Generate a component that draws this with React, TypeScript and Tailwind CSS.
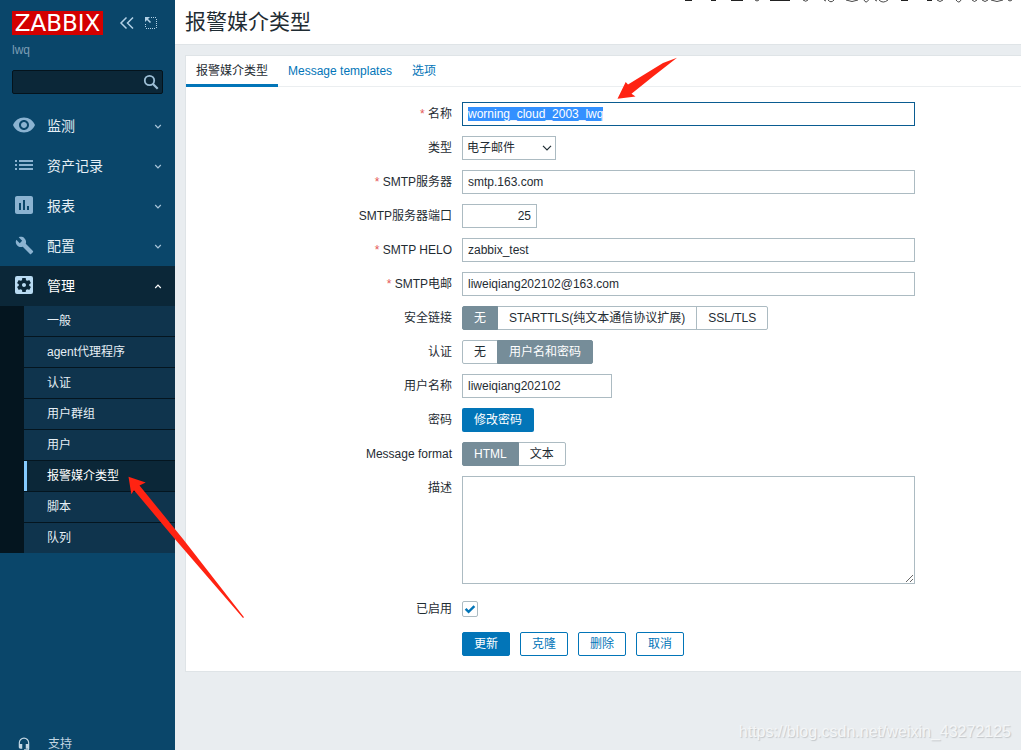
import { useEffect, useRef, useState } from "react";
import type { ReactNode } from "react";
import {
  MdAssessment,
  MdBuild,
  MdHeadsetMic,
  MdList,
  MdSettingsApplications,
  MdVisibility,
} from "react-icons/md";

const MENU = [
  { label: "监测", icon: <MdVisibility size={24} /> },
  { label: "资产记录", icon: <MdList size={24} /> },
  { label: "报表", icon: <MdAssessment size={24} /> },
  { label: "配置", icon: <MdBuild size={19} /> },
  { label: "管理", icon: <MdSettingsApplications size={24} />, open: true },
];

const SUBMENU = ["一般", "agent代理程序", "认证", "用户群组", "用户", "报警媒介类型", "脚本", "队列"];
const ACTIVE_SUB = "报警媒介类型";

const TABS = ["报警媒介类型", "Message templates", "选项"];

const inputClass =
  "h-6 border border-[#acbbc2] bg-white px-[5px] text-xs leading-[14px] text-[#1f2c33] outline-none focus:border-[#0a5c91]";

function Chevron({ up }: { up?: boolean }) {
  return (
    <svg
      className={up ? "text-white" : "text-[#a9c6da]"}
      width="8"
      height="6"
      viewBox="0 0 8 6"
      fill="none"
      stroke="currentColor"
      strokeWidth="1.2"
    >
      <path d={up ? "M1.200 5 4 2.200l2.800 2.800" : "M1.200 2 4 4.800l2.800-2.800"} />
    </svg>
  );
}

function Sidebar() {
  return (
    <aside className="flex h-full w-[175px] shrink-0 flex-col overflow-hidden bg-[#0a466a]">
      <div className="flex h-[37px] shrink-0 items-start px-3 pt-[11px]">
        <a
          href="#home"
          className="flex h-6 w-[91px] items-center justify-center bg-[#d40000] font-['DejaVu_Sans',sans-serif] text-[23px] leading-6 text-white"
        >
          ZABBIX
        </a>
        <button type="button" aria-label="Collapse sidebar" className="ml-4 flex h-6 w-4 items-center text-[#b3d1e6]">
          <svg width="16" height="14" viewBox="0 0 16 14" fill="none" stroke="currentColor" strokeWidth="1.5">
            <path d="M7.500 1.500 2 7l5.500 5.500M14 1.500 8.500 7l5.500 5.500" />
          </svg>
        </button>
        <button type="button" aria-label="Hide sidebar" className="ml-[9px] flex h-6 w-4 items-center text-[#b3d1e6]">
          <svg width="14" height="14" viewBox="0 0 14 14" fill="none" stroke="currentColor">
            <path
              d="M7 1.500h6M12.500 3v10M11 12.500H1M1.500 11V7"
              strokeDasharray="1 1"
              shapeRendering="crispEdges"
            />
            <path d="M1 1h5L1 6z" fill="currentColor" stroke="none" />
            <path d="m2.500 2.500 4 4" strokeWidth="1.600" />
          </svg>
        </button>
      </div>
      <p className="shrink-0 px-3 pt-1 text-xs leading-[18px] text-[#7d9eb5]">lwq</p>

      <form className="relative mx-3 mt-[11px] shrink-0" onSubmit={(e) => e.preventDefault()}>
        <input
          type="text"
          aria-label="Search"
          className="block h-6 w-full rounded-xs border border-[#04131c] bg-[#0b2738] pr-7 pl-1.5 text-xs text-white outline-none"
        />
        <button type="submit" aria-label="Search" className="absolute top-1 right-1 text-[#9dbfd6]">
          <svg width="16" height="16" viewBox="0 0 16 16" fill="none" stroke="currentColor">
            <circle cx="6.500" cy="6.500" r="4.700" strokeWidth="1.800" />
            <path d="m10 10 4.700 4.700" strokeWidth="2.200" />
          </svg>
        </button>
      </form>

      <nav className="mt-3 shrink-0">
        {MENU.map((item) => (
          <a
            key={item.label}
            href="#menu"
            className={`flex h-10 items-center pr-[13px] text-sm ${
              item.open ? "bg-[#0b2738] text-white" : "text-[#e6eff5]"
            }`}
          >
            <span
              className={`flex w-12 shrink-0 justify-center pb-0.5 ${
                item.open ? "text-[#b9dbf2]" : "text-[#8bb3d1]"
              }`}
            >
              {item.icon}
            </span>
            <span className="-ml-px flex-1">{item.label}</span>
            <Chevron up={item.open} />
          </a>
        ))}
        <ul className="bg-[#04151f] pl-6">
          {SUBMENU.map((label) => (
            <li key={label} className="border-b border-[#04151f] last:border-b-0">
              <a
                href="#submenu"
                className={`flex h-[30px] items-center border-l-3 pl-5 text-xs ${
                  label === ACTIVE_SUB
                    ? "border-[#85cbff] bg-[#0b2738] text-white"
                    : "border-[#0f344d] bg-[#0f344d] text-[#e6eff5]"
                }`}
              >
                {label}
              </a>
            </li>
          ))}
        </ul>
      </nav>

      <div className="mt-auto h-[27px] shrink-0 overflow-hidden">
        <a href="#support" className="flex h-[42px] items-center text-xs text-[#c3d6e3]">
          <span className="flex w-12 justify-center">
            <MdHeadsetMic size={14} />
          </span>
          支持
        </a>
      </div>
    </aside>
  );
}

interface RowProps {
  label: string;
  htmlFor?: string;
  required?: boolean;
  children: ReactNode;
}

function Row({ label, htmlFor, required, children }: RowProps) {
  return (
    <div className="flex items-start">
      <label htmlFor={htmlFor} className="w-[276px] shrink-0 pr-2.5 text-right text-xs leading-6">
        {required && <span className="text-[#e45959]">* </span>}
        {label}
      </label>
      {children}
    </div>
  );
}

function Segmented({ name, options, initial }: { name: string; options: string[]; initial: string }) {
  const [value, setValue] = useState(initial);
  return (
    <div role="radiogroup" aria-label={name} className="flex">
      {options.map((option) => (
        <label
          key={option}
          className="relative -ml-px flex h-6 items-center border border-[#acbbc2] px-[11px] text-xs first:ml-0 first:rounded-l-xs last:rounded-r-xs has-checked:z-10 has-checked:border-[#768d99] has-checked:bg-[#768d99] has-checked:text-white"
        >
          <input
            type="radio"
            name={name}
            checked={value === option}
            onChange={() => setValue(option)}
            className="sr-only"
          />
          {option}
        </label>
      ))}
    </div>
  );
}

function MediaTypeForm() {
  const nameRef = useRef<HTMLInputElement>(null);

  useEffect(() => {
    nameRef.current?.focus();
    nameRef.current?.select();
  }, []);

  return (
    <form className="flex flex-col gap-2.5 pt-[15px] pb-[15px]" onSubmit={(e) => e.preventDefault()}>
      <Row label="名称" htmlFor="name" required>
        <input
          id="name"
          ref={nameRef}
          defaultValue="worning_cloud_2003_lwq"
          className={`${inputClass} w-full max-w-[453px] selection:bg-[#3390ff] selection:text-white`}
        />
      </Row>
      <Row label="类型" htmlFor="type">
        <div className="relative">
          <select
            id="type"
            className="block h-6 w-[94px] appearance-none border border-[#acbbc2] bg-white pl-1 text-xs outline-none"
          >
            <option>电子邮件</option>
          </select>
          <svg
            className="pointer-events-none absolute top-2 right-1"
            width="10"
            height="8"
            viewBox="0 0 10 8"
            fill="none"
            stroke="#1f2c33"
            strokeWidth="1.2"
          >
            <path d="M1 1.800 5 5.800l4-4" />
          </svg>
        </div>
      </Row>
      <Row label="SMTP服务器" htmlFor="server" required>
        <input id="server" defaultValue="smtp.163.com" className={`${inputClass} w-full max-w-[453px]`} />
      </Row>
      <Row label="SMTP服务器端口" htmlFor="port">
        <input id="port" defaultValue="25" className={`${inputClass} w-[75px] text-right`} />
      </Row>
      <Row label="SMTP HELO" htmlFor="helo" required>
        <input id="helo" defaultValue="zabbix_test" className={`${inputClass} w-full max-w-[453px]`} />
      </Row>
      <Row label="SMTP电邮" htmlFor="email" required>
        <input id="email" defaultValue="liweiqiang202102@163.com" className={`${inputClass} w-full max-w-[453px]`} />
      </Row>
      <Row label="安全链接">
        <Segmented name="安全链接" options={["无", "STARTTLS(纯文本通信协议扩展)", "SSL/TLS"]} initial="无" />
      </Row>
      <Row label="认证">
        <Segmented name="认证" options={["无", "用户名和密码"]} initial="用户名和密码" />
      </Row>
      <Row label="用户名称" htmlFor="username">
        <input id="username" defaultValue="liweiqiang202102" className={`${inputClass} w-[150px]`} />
      </Row>
      <Row label="密码" htmlFor="password">
        <button id="password" type="button" className="h-6 rounded-xs bg-[#0275b8] px-3 text-xs text-white">
          修改密码
        </button>
      </Row>
      <Row label="Message format">
        <Segmented name="Message format" options={["HTML", "文本"]} initial="HTML" />
      </Row>
      <Row label="描述" htmlFor="description">
        <textarea
          id="description"
          className="block h-[108px] w-full max-w-[453px] resize border border-[#acbbc2] p-1 text-xs outline-none"
        />
      </Row>
      <div className="flex h-7 items-center pt-0.5">
        <label htmlFor="enabled" className="w-[276px] shrink-0 pr-2.5 text-right text-xs">
          已启用
        </label>
        <div className="relative size-4">
          <input
            id="enabled"
            type="checkbox"
            defaultChecked
            className="peer block size-4 appearance-none rounded-xs border border-[#acbbc2] bg-white"
          />
          <svg
            className="pointer-events-none absolute inset-0 hidden peer-checked:block"
            width="16"
            height="16"
            viewBox="0 0 16 16"
            fill="none"
            stroke="#0275b8"
            strokeWidth="2.4"
          >
            <path d="m3.600 7.800 3 3 5.800-5.600" />
          </svg>
        </div>
      </div>
      <div className="flex gap-2.5 pl-[276px] text-xs">
        <button type="submit" className="h-6 rounded-xs border border-[#0275b8] bg-[#0275b8] px-[11px] text-white">
          更新
        </button>
        {["克隆", "删除", "取消"].map((label) => (
          <button key={label} type="button" className="h-6 rounded-xs border border-[#0275b8] px-[11px] text-[#0275b8]">
            {label}
          </button>
        ))}
      </div>
    </form>
  );
}

// Lower edge of a handwritten line that runs off the top of the page
function Scribble() {
  return (
    <svg
      className="pointer-events-none absolute top-0 right-0"
      width="341"
      height="4"
      viewBox="680 0 341 4"
      fill="none"
      stroke="#333"
      strokeWidth="0.9"
    >
      <path d="M685 .3h7M711 .3h5M731 .3h12M770 .3h20M901 .3h7M927 .3h5" strokeWidth="1.4" stroke="#222" />
      <path d="M755 0q2 2 4 0M803 0q3 2.500 5 0M824 0l2 1M828 0q3 3.500 6 0M846 0q6 3 12 0M864 0q2 4 4.500 0M875 0l2 1M879 0q4 4 9 0M937 0q3 3 6 0M956 0q3 4 5 0M972 0q2.500 3 5 0M982 0q3 3 6 0M991 0q6 3 12 0M1008 0q2 2 4 0" />
    </svg>
  );
}

function Arrows() {
  return (
    <svg
      className="pointer-events-none absolute top-0 left-0 z-20"
      width="700"
      height="640"
      viewBox="0 0 700 640"
      fill="#ff2312"
    >
      <path d="M128.500 476.700 145.700 482.500 139.500 485.500 183 539 244 617.300 243 618 174 538 134 490.200 131.300 494.200z" />
      <path d="M677 57.800 663 63 628 84.500 625.700 82 617.500 98.700 635.500 96.500 631.500 93.700 653 76.500z" />
    </svg>
  );
}

export default function App() {
  const [tab, setTab] = useState(TABS[0]);

  return (
    <div className="relative flex h-screen overflow-hidden bg-[#e9edf0] font-['Liberation_Sans','Noto_Sans_CJK_SC',sans-serif] text-[#1f2c33]">
      <Sidebar />
      <main className="flex min-w-0 flex-1 flex-col">
        <header className="relative h-[45px] shrink-0 border-b border-[#dfe4e7] bg-white px-2.5">
          <h1 className="text-[21px] leading-[44px]">报警媒介类型</h1>
          <Scribble />
        </header>

        <section className="mt-2.5 ml-2.5 border-y border-l border-[#dfe4e7] bg-white">
          <div role="tablist" className="flex border-b border-[#ebeef0]">
            {TABS.map((label) => (
              <button
                key={label}
                type="button"
                role="tab"
                aria-selected={tab === label}
                onClick={() => setTab(label)}
                className={`-mb-px h-[31px] border-b-3 px-2.5 pt-0.5 text-xs ${
                  tab === label ? "border-[#0275b8]" : "border-transparent text-[#0275b8]"
                }`}
              >
                {label}
              </button>
            ))}
          </div>
          <MediaTypeForm />
        </section>
      </main>

      <Arrows />
      <p className="pointer-events-none absolute right-2.5 bottom-2 text-base leading-5 text-[#f4f6f7] [text-shadow:1px_1px_1px_#c3c7ca]">
        https://blog.csdn.net/weixin_43272125
      </p>
    </div>
  );
}
